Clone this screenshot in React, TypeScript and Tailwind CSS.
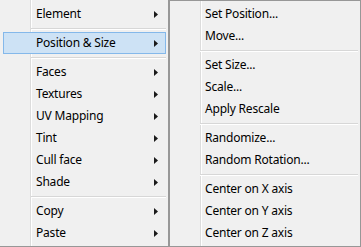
type Entry = { label: string; sub?: boolean; active?: boolean } | 'sep';

const leftItems: Entry[] = [
  { label: 'Element', sub: true },
  'sep',
  { label: 'Position & Size', sub: true, active: true },
  'sep',
  { label: 'Faces', sub: true },
  { label: 'Textures', sub: true },
  { label: 'UV Mapping', sub: true },
  { label: 'Tint', sub: true },
  { label: 'Cull face', sub: true },
  { label: 'Shade', sub: true },
  'sep',
  { label: 'Copy', sub: true },
  { label: 'Paste', sub: true },
];

const rightItems: Entry[] = [
  { label: 'Set Position...' },
  { label: 'Move...' },
  'sep',
  { label: 'Set Size...' },
  { label: 'Scale...' },
  { label: 'Apply Rescale' },
  'sep',
  { label: 'Randomize...' },
  { label: 'Random Rotation...' },
  'sep',
  { label: 'Center on X axis' },
  { label: 'Center on Y axis' },
  { label: 'Center on Z axis' },
];

function Arrow() {
  return (
    <svg width="4" height="7" viewBox="0 0 4 7" className="flex-shrink-0">
      <path d="M0 0 L4 3.5 L0 7 Z" fill="#1a1a1a" />
    </svg>
  );
}

function MenuList({ items }: { items: Entry[] }) {
  return (
    <>
      {items.map((item, i) => {
        if (item === 'sep') {
          return (
            <div key={i} className="h-[7px] flex flex-col justify-center pl-[28px]">
              <div className="h-px bg-[#d7d7d7]" />
              <div className="h-px bg-white" />
            </div>
          );
        }
        return (
          <div
            key={i}
            className={`h-[22px] flex items-center pl-[32px] pr-[7px] border ${
              item.active ? 'bg-[#cde2f5] border-[#84b8ea]' : 'border-transparent'
            }`}
          >
            <span className="flex-1 text-[12px] tracking-[-0.2px] text-black leading-none whitespace-nowrap">
              {item.label}
            </span>
            {item.sub && <Arrow />}
          </div>
        );
      })}
    </>
  );
}

export default function App() {
  return (
    <div
      className="w-[361px] h-[247px] flex overflow-hidden bg-[#f0f0f0]"
      style={{ fontFamily: '"Noto Sans", "Open Sans", sans-serif' }}
    >
      {/* parent menu, top cut off */}
      <div className="w-[169px] h-[247px] flex flex-col pt-[3px] pl-[3px] pr-[2px] pb-[2px] border-r border-b border-[#979797] bg-[linear-gradient(to_right,#f0f0f0_30px,#dcdcdc_30px,#dcdcdc_31px,#ffffff_31px,#ffffff_32px,#f0f0f0_32px)]">
        <MenuList items={leftItems} />
      </div>

      {/* submenu */}
      <div className="w-[192px] h-[247px] flex flex-col p-[2px] border border-[#979797] bg-[linear-gradient(to_right,#f0f0f0_30px,#dcdcdc_30px,#dcdcdc_31px,#ffffff_31px,#ffffff_32px,#f0f0f0_32px)]">
        <MenuList items={rightItems} />
      </div>
    </div>
  );
}
